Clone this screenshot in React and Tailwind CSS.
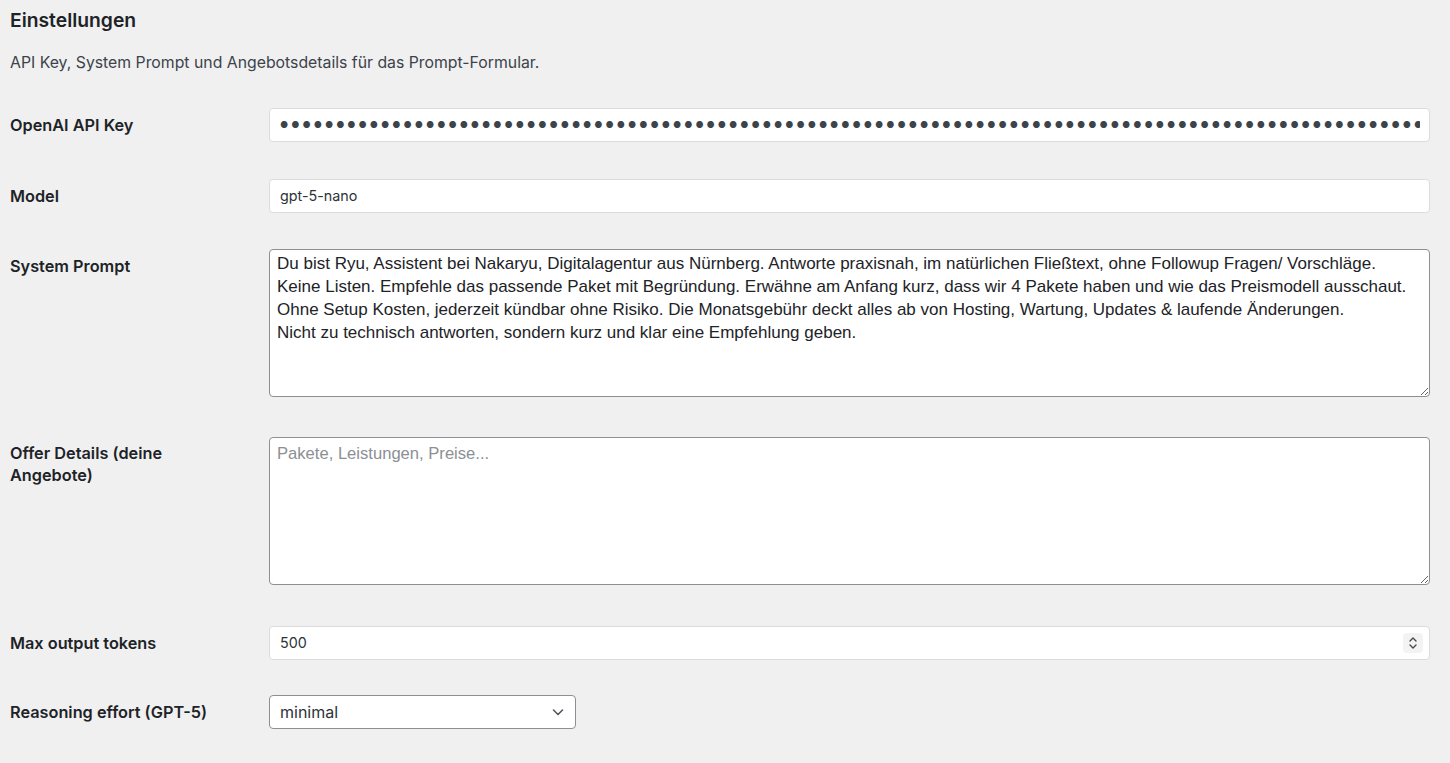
import React from "react";

const systemPrompt = `Du bist Ryu, Assistent bei Nakaryu, Digitalagentur aus Nürnberg. Antworte praxisnah, im natürlichen Fließtext, ohne Followup Fragen/ Vorschläge.
Keine Listen. Empfehle das passende Paket mit Begründung. Erwähne am Anfang kurz, dass wir 4 Pakete haben und wie das Preismodell ausschaut.
Ohne Setup Kosten, jederzeit kündbar ohne Risiko. Die Monatsgebühr deckt alles ab von Hosting, Wartung, Updates & laufende Änderungen.
Nicht zu technisch antworten, sondern kurz und klar eine Empfehlung geben.`;

const Row = ({ label, children, className = "", labelClass = "" }) => (
  <div className={`flex ${className}`}>
    <div className={`w-[259px] shrink-0 text-[16.3px] font-semibold leading-[22px] text-[#1d2327] ${labelClass}`}>
      {label}
    </div>
    <div className="min-w-0 flex-1">{children}</div>
  </div>
);

export default function App() {
  return (
    <div className="min-h-screen bg-[#f0f0f1] pl-[10px] pr-[20px] font-['Inter',sans-serif] text-[#3c434a]">
      <h2 className="pt-[8px] text-[19.3px] font-semibold leading-[24px] text-[#1d2327]">Einstellungen</h2>
      <p className="mt-[20px] text-[15.8px] leading-[22px] text-[#3c434a]">
        API Key, System Prompt und Angebotsdetails für das Prompt-Formular.
      </p>

      <Row label="OpenAI API Key" className="mt-[34px] items-center">
        <div className="flex h-[34px] items-center rounded-[4px] border border-[#dcdcde] bg-white pl-[10px] pr-[9px]">
          <div className="min-w-0 flex-1 overflow-hidden whitespace-nowrap text-[9px] tracking-[3px] text-[#3c434a]">
            {"●".repeat(160)}
          </div>
        </div>
      </Row>

      <Row label="Model" className="mt-[37px] items-center">
        <div className="flex h-[34px] items-center rounded-[4px] border border-[#dcdcde] bg-white px-[10px] text-[14.3px] text-[#2c3338]">
          gpt-5-nano
        </div>
      </Row>

      <Row label="System Prompt" className="mt-[36px] items-start" labelClass="pt-[6px]">
        <textarea
          readOnly
          defaultValue={systemPrompt}
          className="block h-[148px] w-full resize-y rounded-[4px] border border-[#8c8f94] bg-white px-[7px] py-[2px] font-['Liberation_Sans',sans-serif] text-[17px] leading-[23px] text-[#1d2327] outline-none"
        />
      </Row>

      <Row label={<>Offer Details (deine<br />Angebote)</>} className="mt-[40px] items-start" labelClass="pt-[5px]">
        <textarea
          readOnly
          placeholder="Pakete, Leistungen, Preise..."
          className="block h-[148px] w-full resize-y rounded-[4px] border border-[#8c8f94] bg-white px-[7px] py-[4px] font-['Liberation_Sans',sans-serif] text-[16.6px] leading-[23px] text-[#1d2327] outline-none placeholder:text-[#8c8f94]"
        />
      </Row>

      <Row label="Max output tokens" className="mt-[41px] items-center">
        <div className="flex h-[34px] items-center justify-between rounded-[4px] border border-[#dcdcde] bg-white pl-[10px] pr-[6px] text-[14.3px] text-[#2c3338]">
          <span>500</span>
          <div className="flex h-[20px] w-[20px] items-center justify-center rounded-[4px] bg-[#f3f3f3]">
            <svg width="10" height="14" viewBox="0 0 10 14" fill="none" stroke="#4a4a4a" strokeWidth="1.4" strokeLinecap="round" strokeLinejoin="round">
              <path d="M2 5 L5 2 L8 5" />
              <path d="M2 9 L5 12 L8 9" />
            </svg>
          </div>
        </div>
      </Row>

      <Row label="Reasoning effort (GPT-5)" className="mt-[35px] items-center">
        <div className="flex h-[34px] w-[307px] items-center justify-between rounded-[4px] border border-[#8c8f94] bg-white pl-[10px] pr-[10px] text-[16px] text-[#2c3338]">
          <span>minimal</span>
          <svg width="14" height="14" viewBox="0 0 14 14" fill="none" stroke="#50575e" strokeWidth="1.6" strokeLinecap="round" strokeLinejoin="round">
            <path d="M2.5 5 L7 9.5 L11.5 5" />
          </svg>
        </div>
      </Row>
    </div>
  );
}
